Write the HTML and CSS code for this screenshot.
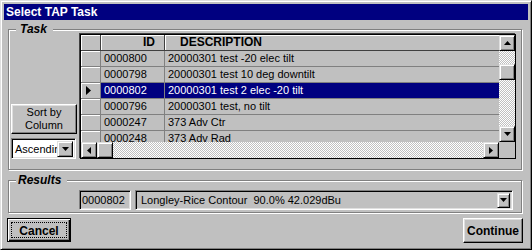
FILE: index.html
```html
<!DOCTYPE html>
<html lang="en">
<head>
  <meta charset="UTF-8" />
  <title>Select TAP Task</title>
  <link rel="stylesheet" href="styles.css">
</head>
<body>

<div class="window">
  <div class="titlebar">Select TAP Task</div>

  <div class="group task">
    <span class="group-label">Task</span>

    <div class="sort-col">
      <button class="btn sort-btn">Sort by<br>Column</button>
      <div class="combo order">
        <span class="combo-text">Ascending</span>
        <span class="drop-btn"><svg width="7" height="4"><path d="M0 0h7L3.5 4z"/></svg></span>
      </div>
    </div>

    <div class="grid">
      <div class="view">
        <table>
          <colgroup><col class="c-ind"><col class="c-id"><col></colgroup>
          <tr><th class="ind"></th><th class="h-id">ID</th><th class="h-desc">DESCRIPTION</th></tr>
          <tr><td class="ind"></td><td>0000800</td><td>20000301 test -20 elec tilt</td></tr>
          <tr><td class="ind"></td><td>0000798</td><td>20000301 test 10 deg downtilt</td></tr>
          <tr class="sel"><td class="ind"><svg width="5" height="9"><path d="M0 0l5 4.5L0 9z"/></svg></td><td>0000802</td><td>20000301 test 2 elec -20 tilt</td></tr>
          <tr><td class="ind"></td><td>0000796</td><td>20000301 test, no tilt</td></tr>
          <tr><td class="ind"></td><td>0000247</td><td>373 Adv Ctr</td></tr>
          <tr><td class="ind"></td><td>0000248</td><td>373 Adv Rad</td></tr>
        </table>
      </div>

      <div class="vscroll">
        <span class="sb-btn"><svg width="7" height="4"><path d="M3.5 0L7 4H0z"/></svg></span>
        <span class="sb-btn thumb-v"></span>
        <span class="sb-fill"></span>
        <span class="sb-btn"><svg width="7" height="4"><path d="M0 0h7L3.5 4z"/></svg></span>
      </div>

      <div class="hscroll">
        <span class="sb-btn"><svg width="4" height="7"><path d="M4 0v7L0 3.5z"/></svg></span>
        <span class="sb-btn"></span>
        <span class="sb-fill"></span>
        <span class="sb-btn"><svg width="4" height="7"><path d="M0 0v7l4-3.5z"/></svg></span>
      </div>

      <div class="corner"></div>
    </div>
  </div>

  <div class="group results">
    <span class="group-label">Results</span>
    <div class="field id-field">0000802</div>
    <div class="combo result-combo">
      <span class="combo-text">Longley-Rice Contour&nbsp; 90.0% 42.029dBu</span>
      <span class="drop-btn"><svg width="7" height="4"><path d="M0 0h7L3.5 4z"/></svg></span>
    </div>
  </div>

  <div class="actions">
    <button class="btn default-btn"><span class="focus">Cancel</span></button>
    <button class="btn continue-btn">Continue</button>
  </div>
</div>

</body>
</html>
```

FILE: styles.css
```css
* { box-sizing: border-box; }
body { margin: 0; background: #c0c0c0; font-family: "Liberation Sans", Arial, sans-serif; font-size: 11px; color: #000; }
svg { display: block; fill: #000; }

.window {
  width: 532px; height: 250px; padding: 3px; background: #c0c0c0;
  border: 1px solid; border-color: #dfdfdf #000 #000 #dfdfdf;
  box-shadow: inset 1px 1px #fff, inset -1px -1px #808080;
  display: flex; flex-direction: column;
}
.titlebar { height: 16px; line-height: 16px; padding-left: 2px; background: #000080; color: #fff; font-weight: bold; font-size: 12px; }

/* etched group boxes */
.group {
  position: relative; margin: 0 6px 0 4px;
  border: 1px solid #808080;
  box-shadow: inset 1px 1px #fff, 1px 1px #fff;
  display: flex;
}
.group-label {
  position: absolute; top: -8px; left: 7px;
  padding: 0 6px 0 4px; line-height: 14px;
  background: #c0c0c0; font-weight: bold; font-style: italic; font-size: 12px;
}
.task { margin-top: 9px; height: 141px; padding: 4px 5px 10px 1px; align-items: flex-end; gap: 3px; }
.results { margin-top: 10px; height: 33px; padding: 7px 8px 0 70px; gap: 4px; }
.results .group-label { padding-left: 2px; }

/* buttons */
.btn {
  font-family: inherit; font-size: 11px; color: #000; background: #c0c0c0; padding: 0;
  border: 1px solid; border-color: #fff #000 #000 #fff;
  box-shadow: inset -1px -1px #808080, inset 1px 1px #dfdfdf;
}
.sort-btn { width: 66px; height: 30px; line-height: 13px; }
.default-btn {
  width: 64px; height: 24px; padding: 3px; border: 1px solid #000;
  box-shadow: inset 1px 1px #fff, inset -1px -1px #000, inset -2px -2px #808080;
  font-weight: bold; font-size: 12px;
}
.focus { display: block; height: 100%; line-height: 16px; border: 1px dotted #000; }
.continue-btn { width: 60px; height: 25px; font-weight: bold; font-size: 12px; }
.actions { margin: 5px 5px 0 3px; display: flex; justify-content: space-between; align-items: flex-start; }

/* left column */
.sort-col { width: 66px; display: flex; flex-direction: column; gap: 4px; margin-left: 1px; }

/* combos and fields */
.combo, .field {
  border: 1px solid; border-color: #808080 #fff #fff #808080;
  box-shadow: inset 1px 1px #000, inset -1px -1px #dfdfdf;
}
.combo { display: flex; align-items: center; padding: 2px; overflow: hidden; }
.combo-text { flex: 1; white-space: nowrap; overflow: hidden; padding-left: 2px; }
.order { height: 21px; width: 65px; background: #fff; }
.order .combo-text { padding-left: 1px; font-size: 11px; }
.result-combo { flex: 1; height: 20px; margin-top: 2px; }
.result-combo .combo-text { padding-left: 3px; }
.field { width: 52px; height: 20px; margin-top: 2px; line-height: 18px; padding-left: 2px; }
.drop-btn {
  width: 16px; height: 16px; flex: none; background: #c0c0c0;
  border: 1px solid; border-color: #dfdfdf #000 #000 #dfdfdf;
  box-shadow: inset 1px 1px #fff, inset -1px -1px #808080;
  display: flex; align-items: center; justify-content: center;
}
.result-combo .drop-btn { width: 13px; height: 15px; }

/* data grid */
.grid {
  width: 438px; height: 125px; border: 1px solid #000;
  box-shadow: -1px -1px #404040;
  display: grid; grid-template-columns: 1fr 16px; grid-template-rows: 1fr 16px;
  background: #c0c0c0;
}
.view { overflow: hidden; }
table { width: 420px; table-layout: fixed; border-collapse: separate; border-spacing: 0; }
.c-ind { width: 20px; }
.c-id { width: 64px; }
th, td {
  height: 16px; padding: 0 3px; line-height: 15px; white-space: nowrap; overflow: hidden; text-align: left;
  border-right: 1px solid #808080; border-bottom: 1px solid #808080;
}
td:last-child, th:last-child { border-right: none; }
th { font-weight: bold; font-size: 12px; border-color: #404040; box-shadow: inset 1px 1px #fff; }
.h-id { text-align: right; padding-right: 9px; }
.h-desc { padding-left: 15px; }
td.ind { box-shadow: inset 1px 1px #fff; padding: 0 0 0 5px; }
.sel td { background: #000080; color: #fff; }
.sel td.ind { background: #c0c0c0; }

.vscroll, .hscroll { display: flex; background-color: #fff; background-image: conic-gradient(#c0c0c0 25%, #fff 0 50%, #c0c0c0 0 75%, #fff 0); background-size: 2px 2px; }
.vscroll { flex-direction: column; }
.sb-btn {
  width: 16px; height: 16px; flex: none; background: #c0c0c0;
  border: 1px solid; border-color: #dfdfdf #000 #000 #dfdfdf;
  box-shadow: inset 1px 1px #fff, inset -1px -1px #808080;
  display: flex; align-items: center; justify-content: center;
}
.thumb-v { margin-top: 13px; }
.sb-fill { flex: 1; }
.corner { background: #c0c0c0; }
```
